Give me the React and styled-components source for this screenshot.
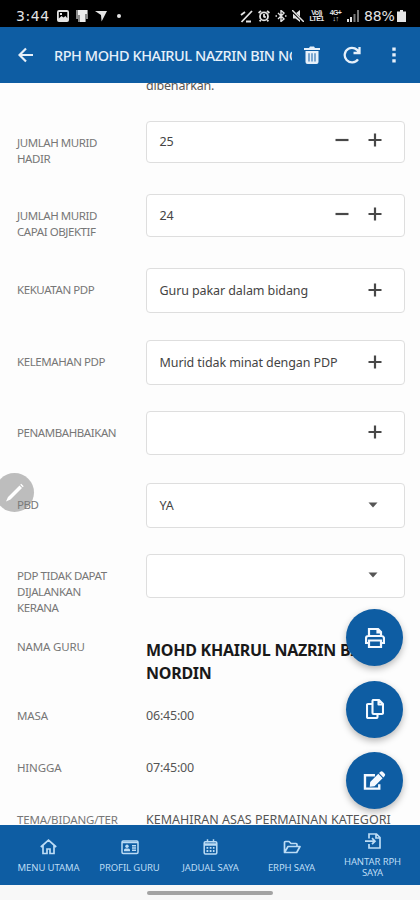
import styled, { createGlobalStyle } from 'styled-components';

const GlobalStyle = createGlobalStyle`
    * {
        box-sizing: border-box;
    }

    body {
        margin: 0;
        background-color: #fdfdfd;
        font-family: "Noto Sans", "Open Sans", sans-serif;
    }
`;

const Screen = styled.div`
    position: relative;
    display: flex;
    flex-direction: column;
    width: 420px;
    height: 900px;
    overflow: hidden;
`;

const StatusBar = styled.div`
    display: flex;
    align-items: center;
    justify-content: space-between;
    height: 27px;
    padding: 5px 14px 0 16px;
    background-color: #000;
    color: #e4e4e4;
`;

const StatusGroup = styled.div`
    display: flex;
    align-items: center;
    gap: ${props => props.$gap}px;
`;

const StatusText = styled.span`
    width: ${props => props.$width}px;
    font-family: "DejaVu Sans", sans-serif;
    font-size: 14px;
    line-height: 16px;
    letter-spacing: ${props => props.$spacing}px;
    white-space: nowrap;
`;

const Network = styled.span`
    width: ${props => props.$width}px;
    font-family: "Liberation Sans", sans-serif;
    font-size: 7px;
    font-weight: bold;
    line-height: 6px;
    letter-spacing: -0.6px;
    white-space: nowrap;
    text-align: center;
`;

const Icon = styled.svg`
    display: block;
    flex: none;
    width: ${props => props.$w}px;
    height: ${props => props.$h || props.$w}px;
`;

const AppBar = styled.header`
    display: flex;
    align-items: center;
    height: 56px;
    flex: none;
    padding-left: 18px;
    background-color: #0e5da3;
    color: #e6f0fa;
`;

const Title = styled.h1`
    flex: none;
    width: 238px;
    margin: 0 12px 0 20px;
    overflow: hidden;
    font-size: 14.5px;
    font-weight: 500;
    line-height: 24px;
    letter-spacing: -0.45px;
    white-space: nowrap;
`;

const Actions = styled.div`
    display: flex;
    align-items: center;
    gap: 22px;
`;

const Content = styled.main`
    flex: none;
    height: 742px;
    overflow: hidden;
    background-color: #fdfdfd;
`;

const ClippedRow = styled.div`
    height: 38px;
    padding-left: 146px;
    overflow: hidden;
`;

const ClippedText = styled.div`
    margin-top: -6px;
    color: #555;
    font-size: 12.5px;
    line-height: 18px;
    letter-spacing: -0.2px;
`;

const Row = styled.div`
    display: grid;
    grid-template-columns: 129px 259px;
    align-items: start;
    height: ${props => props.$height}px;
    padding-left: 17px;
`;

const Label = styled.div`
    width: 112px;
    padding-top: ${props => (props.$plain ? 0 : 14)}px;
    color: #777;
    font-size: 11.5px;
    line-height: 16px;
    letter-spacing: ${props => (props.$plain ? -0.15 : -0.43)}px;
    white-space: pre-line;
`;

const Field = styled.div`
    display: flex;
    align-items: center;
    height: ${props => props.$height}px;
    padding: 0 22px 0 12.5px;
    border: 1px solid #dedede;
    border-radius: 4px;
    background-color: #fff;
    color: #444;
`;

const FieldText = styled.span`
    flex: 1;
    font-size: 12.5px;
    line-height: 18px;
    letter-spacing: -0.09px;
    white-space: nowrap;
`;

const Stepper = styled.div`
    display: flex;
    gap: 19px;
    padding-bottom: 4px;
`;

const FieldMark = styled.div`
    padding: 0 ${props => props.$inset || 0}px 2px 0;
`;

const Value = styled.div`
    color: #555;
    font-size: 12.5px;
    line-height: 16px;
    letter-spacing: ${props => props.$spacing || 0}px;
    white-space: nowrap;
`;

const Name = styled.div`
    color: #191919;
    font-size: 16px;
    font-weight: 700;
    line-height: 23px;
    letter-spacing: -0.25px;
    white-space: pre;
`;

const PenBubble = styled.div`
    position: absolute;
    top: 473px;
    left: -5px;
    display: flex;
    align-items: center;
    justify-content: center;
    width: 39px;
    height: 39px;
    border-radius: 50%;
    background-color: rgba(125, 125, 125, 0.5);
    color: #fff;
`;

const FabColumn = styled.div`
    position: absolute;
    top: 609px;
    right: 17px;
    display: flex;
    flex-direction: column;
    gap: 14.5px;
`;

const Fab = styled.button`
    display: flex;
    align-items: center;
    justify-content: center;
    width: 57px;
    height: 57px;
    padding: 0;
    border: 0;
    border-radius: 50%;
    background-color: #0e5da3;
    color: #f4f9ff;
    box-shadow: 0 3px 7px rgba(0, 0, 0, 0.28);
`;

const BottomNav = styled.nav`
    display: grid;
    grid-template-columns: repeat(5, 81px);
    flex: none;
    height: 60px;
    padding-left: 8px;
    background-color: #0e5da3;
    color: #bcdcf5;
`;

const NavItem = styled.a`
    display: flex;
    flex-direction: column;
    align-items: center;
    gap: ${props => (props.$tall ? 7 : 7)}px;
    padding-top: ${props => (props.$tall ? 8 : 14)}px;
    font-size: 9.5px;
    line-height: 11px;
    letter-spacing: -0.1px;
    text-align: center;
    white-space: pre;
`;

const GestureArea = styled.div`
    display: flex;
    justify-content: center;
    flex: none;
    height: 15px;
    padding-top: 6px;
    background-color: #f8f8f8;
`;

const GestureHandle = styled.div`
    width: 126px;
    height: 4px;
    border-radius: 2px;
    background-color: #a3a3a3;
`;

const Plus = () => (
    <Icon $w={14} viewBox="0 0 14 14" stroke="#484848" strokeWidth="2.2">
        <path d="M7 .5v13M.5 7h13" />
    </Icon>
);

const Minus = () => (
    <Icon $w={14} viewBox="0 0 14 14" stroke="#484848" strokeWidth="2.2">
        <path d="M.5 7h13" />
    </Icon>
);

const Caret = () => (
    <Icon $w={10} $h={6} viewBox="0 0 10 6" fill="#555">
        <path d="M.5.5h9L5 5.5z" />
    </Icon>
);

const fields = [
    { label: 'JUMLAH MURID\nHADIR', value: '25', kind: 'number', height: 42, row: 73 },
    { label: 'JUMLAH MURID\nCAPAI OBJEKTIF', value: '24', kind: 'number', height: 43, row: 74 },
    { label: 'KEKUATAN PDP', value: 'Guru pakar dalam bidang', kind: 'list', height: 45, row: 72 },
    { label: 'KELEMAHAN PDP', value: 'Murid tidak minat dengan PDP', kind: 'list', height: 45, row: 71 },
    { label: 'PENAMBAHBAIKAN', value: '', kind: 'list', height: 44, row: 72 },
    { label: 'PBD', value: 'YA', kind: 'select', height: 45, row: 71 },
    { label: 'PDP TIDAK DAPAT\nDIJALANKAN\nKERANA', value: '', kind: 'select', height: 44, row: 85 },
];

const FieldRow = ({ label, value, kind, height, row }) => (
    <Row $height={row}>
        <Label>{label}</Label>
        <Field $height={height}>
            <FieldText>{value}</FieldText>
            {kind === 'number' && (
                <Stepper>
                    <Minus />
                    <Plus />
                </Stepper>
            )}
            {kind === 'list' && (
                <FieldMark>
                    <Plus />
                </FieldMark>
            )}
            {kind === 'select' && (
                <FieldMark $inset={4}>
                    <Caret />
                </FieldMark>
            )}
        </Field>
    </Row>
);

const StatusIcons = () => (
    <StatusGroup $gap={5}>
        <Icon $w={13} viewBox="0 0 13 13" fill="none" stroke="currentColor" strokeWidth="1.8">
            <path d="M1.5 12 12 1M1 5l4-3M6 11.5h5" />
        </Icon>
        <Icon $w={12} viewBox="0 0 12 12" fill="none" stroke="currentColor" strokeWidth="1.8">
            <circle cx="6" cy="6.4" r="4" />
            <path d="M.6 3 3 .8M11.4 3 9 .8M6 4v2.6l1.8.8M2.8 10l-1.2 1.4M9.2 10l1.2 1.4" />
        </Icon>
        <Icon $w={12} viewBox="0 0 12 12" fill="none" stroke="currentColor" strokeWidth="1.4">
            <path d="m3 3 6 6-3 2.500V.5L9 3 3 9M.5 6H2M10 6h1.5" />
        </Icon>
        <Icon $w={12} viewBox="0 0 12 12" fill="currentColor">
            <path d="M1 3.500h2.500L8 0v12L3.500 8.500H1z" />
            <path stroke="#000" strokeWidth="2.6" d="m0 1 12 11" />
            <path stroke="currentColor" strokeWidth="1.5" d="m0 0 12 12" />
        </Icon>
        <Network $width={15}>Vo))<br />LTE1</Network>
        <Network $width={13}>4G+<br />↓↑</Network>
        <Icon $w={12} viewBox="0 0 12 12" fill="currentColor">
            <path d="M0 9h2v3H0zM3 7h2v5H3z" />
            <path fill="#777" d="M6.5 4h2v8h-2zM10 0h2v12h-2z" />
        </Icon>
        <StatusGroup $gap={2}>
            <StatusText $width={31} $spacing={-0.2}>88%</StatusText>
            <Icon $w={9} $h={12} viewBox="0 0 9 12" fill="currentColor">
                <path d="M3 0h3v1.5h3V12H0V1.5h3z" />
            </Icon>
        </StatusGroup>
    </StatusGroup>
);

const App = () => {
    return (
        <>
            <GlobalStyle />
            <Screen>
                <StatusBar>
                    <StatusGroup $gap={6}>
                        <StatusText $width={35} $spacing={0.6}>3:44</StatusText>
                        <Icon $w={12} viewBox="0 0 12 12" fill="currentColor">
                            <path fillRule="evenodd" d="M2 0h8a2 2 0 0 1 2 2v8a2 2 0 0 1-2 2H2a2 2 0 0 1-2-2V2a2 2 0 0 1 2-2zm-.2 8.500L4.500 6l2 1.600L8.500 6l1.800 2.300V2H1.800zM3 3h2v2H3z" />
                        </Icon>
                        <Icon $w={14} viewBox="0 0 14 14">
                            <path fill="#8b8b8b" d="M1 1h12v9h-2v3H3v-3H1z" />
                            <path fill="#eee" d="M3 1h9v4h-2v8H5V6H3z" />
                        </Icon>
                        <Icon $w={12} viewBox="0 0 12 12" fill="currentColor">
                            <path d="M0 1h12L6.600 11.500 6 5z" />
                        </Icon>
                        <Icon $w={13} $h={4} viewBox="0 0 13 4" fill="currentColor">
                            <circle cx="6" cy="2" r="2" />
                        </Icon>
                    </StatusGroup>
                    <StatusIcons />
                </StatusBar>

                <AppBar>
                    <Icon $w={16} viewBox="0 0 16 16" fill="none" stroke="currentColor" strokeWidth="2.2">
                        <path d="M15 8H2M8 1.500 1.500 8 8 14.500" />
                    </Icon>
                    <Title>RPH MOHD KHAIRUL NAZRIN BIN NORDIN</Title>
                    <Actions>
                        <Icon $w={16} $h={18} viewBox="0 0 16 18" fill="currentColor">
                            <path d="M0 2h5l1-1.500h4L11 2h5v2H0z" />
                            <path fillRule="evenodd" d="M1.500 5h13v11a2 2 0 0 1-2 2h-9a2 2 0 0 1-2-2zm3 2.200v8.300h1V7.200zm3 0v8.300h1V7.200zm3 0v8.300h1V7.200z" />
                        </Icon>
                        <Icon $w={20} $h={18} viewBox="-1 0 20 18" fill="none" stroke="currentColor" strokeWidth="2.3">
                            <path d="M16.500 1v6h-6M16 7A7.300 7.300 0 1 0 15 13.300" />
                        </Icon>
                        <Icon $w={20} $h={16} viewBox="4 0 20 16" fill="currentColor">
                            <path d="M12.300.5h3.400v3.300h-3.400zM12.300 6.300h3.400v3.300h-3.400zM12.300 12.200h3.400v3.300h-3.400z" />
                        </Icon>
                    </Actions>
                </AppBar>

                <Content>
                    <ClippedRow>
                        <ClippedText>dibenarkan.</ClippedText>
                    </ClippedRow>
                    {fields.map(field => (
                        <FieldRow key={field.label} {...field} />
                    ))}
                    <Row $height={69}>
                        <Label $plain>NAMA GURU</Label>
                        <Name>{'MOHD KHAIRUL NAZRIN BIN\nNORDIN'}</Name>
                    </Row>
                    <Row $height={52}>
                        <Label $plain>MASA</Label>
                        <Value $spacing={-0.2}>06:45:00</Value>
                    </Row>
                    <Row $height={52}>
                        <Label $plain>HINGGA</Label>
                        <Value $spacing={-0.2}>07:45:00</Value>
                    </Row>
                    <Row $height={52}>
                        <Label $plain>TEMA/BIDANG/TER</Label>
                        <Value>KEMAHIRAN ASAS PERMAINAN KATEGORI</Value>
                    </Row>
                </Content>

                <BottomNav>
                    <NavItem>
                        <Icon $w={17} $h={16} viewBox="0 0 17 16" fill="none" stroke="currentColor" strokeWidth="1.7">
                            <path d="M.8 8 8.500 1.200 16.200 8M3 6.500v8h4V10h3v4.500h4v-8" />
                        </Icon>
                        MENU UTAMA
                    </NavItem>
                    <NavItem>
                        <Icon $w={18} $h={16} viewBox="0 0 18 16" fill="none" stroke="currentColor" strokeWidth="1.5">
                            <rect x="1" y="2" width="16" height="12.500" rx="1.200" />
                            <path d="M1 3.500h16M11 6.700h4M11 9h4M11 11.300h4" />
                            <circle cx="6" cy="7.200" r="1.700" fill="currentColor" stroke="none" />
                            <path fill="currentColor" stroke="none" d="M3 12.200V11q0-1.500 1.500-1.500h3Q9 9.500 9 11v1.200z" />
                        </Icon>
                        PROFIL GURU
                    </NavItem>
                    <NavItem>
                        <Icon $w={15} $h={16} viewBox="0 0 15 16" fill="none" stroke="currentColor" strokeWidth="1.5">
                            <rect x="1.200" y="2.700" width="12.600" height="12.300" rx="1.300" />
                            <path d="M4.500.3v3M10.500.3v3M1 5h13M1 6h13" />
                            <path strokeWidth="1.8" strokeDasharray="1.8 1.4" d="M3.500 8.800h8M3.500 12h8" />
                        </Icon>
                        JADUAL SAYA
                    </NavItem>
                    <NavItem>
                        <Icon $w={18} $h={16} viewBox="0 0 18 16" fill="none" stroke="currentColor" strokeWidth="1.7" strokeLinejoin="round">
                            <path d="M1.500 13V3.500q0-1 1-1H6l2 2h5q1 0 1 1v2M1.500 13.500 5 7.500h12l-3.300 6z" />
                        </Icon>
                        ERPH SAYA
                    </NavItem>
                    <NavItem $tall>
                        <Icon $w={16} viewBox="0 0 16 16" fill="none" stroke="currentColor" strokeWidth="1.7">
                            <path d="M4 5.500V1h7.500L15 4.500V15H4v-4M11 1v4h4M0 8.200h9.500M7 5.200l3 3-3 3" />
                        </Icon>
                        {'HANTAR RPH\nSAYA'}
                    </NavItem>
                </BottomNav>

                <GestureArea>
                    <GestureHandle />
                </GestureArea>

                <PenBubble>
                    <Icon $w={20} viewBox="0 0 20 20" fill="currentColor">
                        <path d="m1 18.500 2-4.500L14.500 2.500l2.500 2.500L5.500 16.500zM15.200 1.800l1-1L18.700 3.300l-1 1z" />
                    </Icon>
                </PenBubble>

                <FabColumn>
                    <Fab aria-label="Cetak">
                        <Icon $w={20} viewBox="0 0 20 20" fill="none" stroke="currentColor" strokeWidth="2.2">
                            <path d="M4 8V1h9l3 3v4M12.500 1v3.500H16M4 15H1v-4.500Q1 8 3.500 8h13Q19 8 19 10.500V15h-3M4 12.500h12V19H4z" />
                        </Icon>
                    </Fab>
                    <Fab aria-label="Salin">
                        <Icon $w={18} $h={20} viewBox="0 0 18 20" fill="none" stroke="currentColor" strokeWidth="2.1" strokeLinejoin="round">
                            <path d="M6.500 1H13l4 4v9q0 1-1 1H7.500q-1 0-1-1V2q0-1 1-1M12.500 1v4.500H17M6.500 5H2q-1 0-1 1v12q0 1 1 1h8.500q1 0 1-1v-3" />
                        </Icon>
                    </Fab>
                    <Fab aria-label="Edit">
                        <Icon $w={23} $h={20} viewBox="1 0 23 21" fill="currentColor">
                            <path d="M13 4.500H2.500v14h15V14" fill="none" stroke="currentColor" strokeWidth="2.5" />
                            <path d="m8 11.500 8.500-8.500 4.500 4.500-8.500 8.500-5 .6zM17.300 2.200l1.400-1.400q1.300-1 2.500 0l2 2q1 1.200 0 2.500l-1.400 1.400z" />
                        </Icon>
                    </Fab>
                </FabColumn>
            </Screen>
        </>
    );
};

export default App;
